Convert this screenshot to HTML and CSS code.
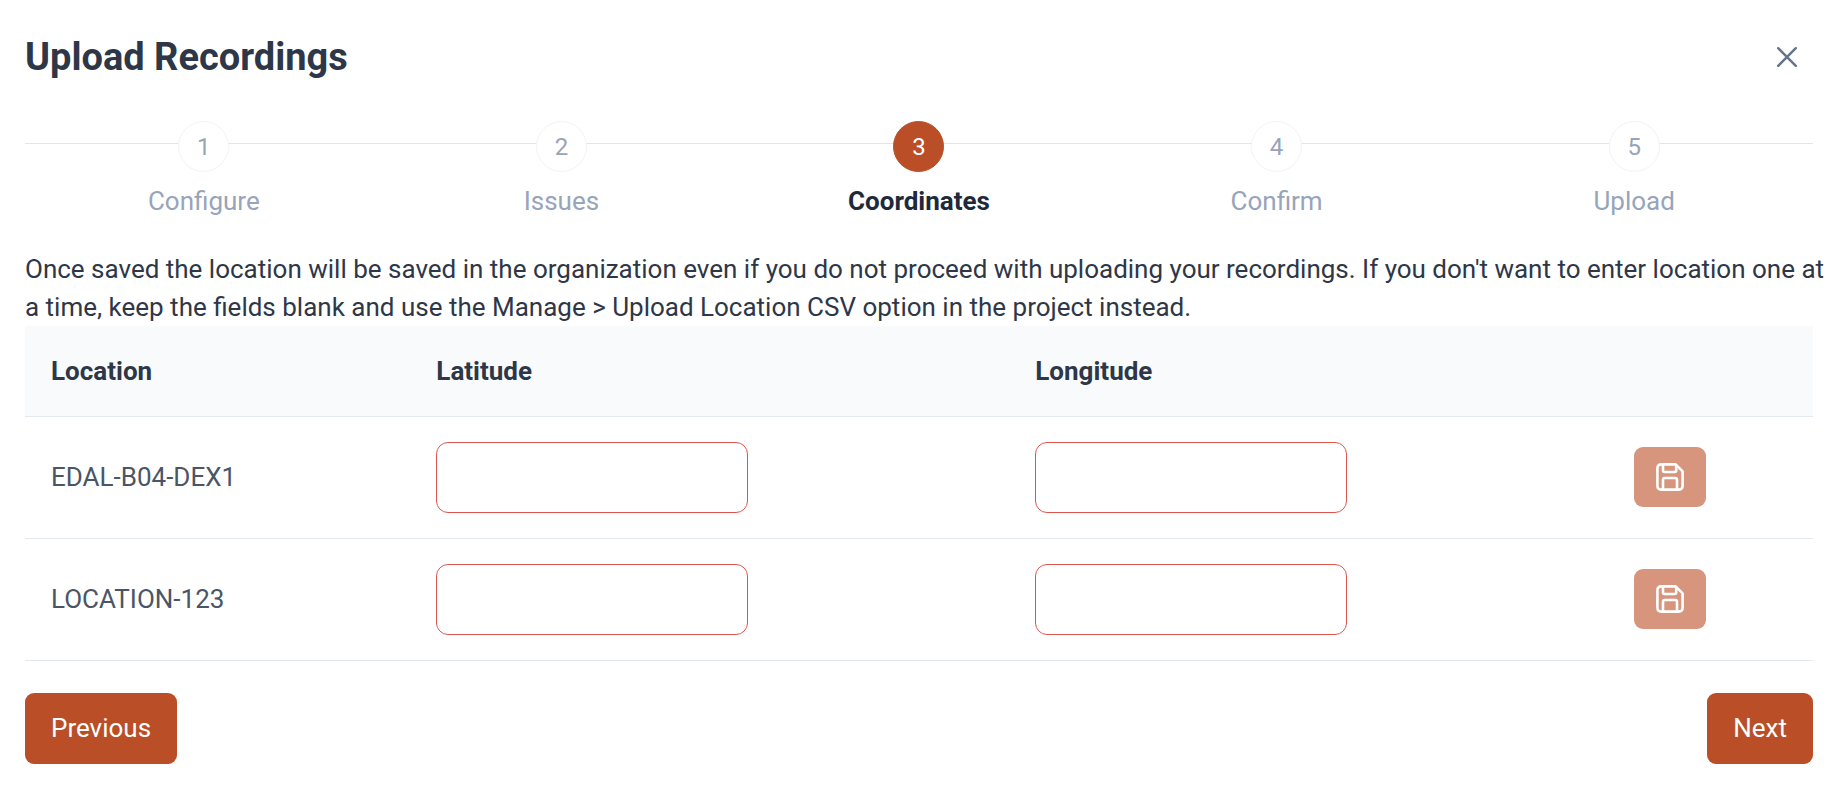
FILE: index.html
```html
<!DOCTYPE html>
<html lang="en">
<head>
<meta charset="utf-8">
<meta name="viewport" content="width=device-width, initial-scale=1">
<title>Upload Recordings</title>
<link rel="stylesheet" href="styles.css">
</head>
<body>
<svg class="sprite" aria-hidden="true">
  <symbol id="save" viewBox="0 0 14 14" fill="none" stroke="currentColor" stroke-linecap="round" stroke-linejoin="round">
    <path d="M9.8 .7H2.6Q.7 .7 .7 2.6v8.8Q.7 13.3 2.6 13.3h8.8q1.9 0 1.9-1.9V4.2z"/>
    <path d="M3.5 .9v2.9q0 .7.7.7h5.2q.7 0 .7-.7V1.1"/>
    <path d="M3.5 13.1V8.4q0-.9.9-.9h5.2q.9 0 .9.9v4.7"/>
  </symbol>
</svg>
<main class="dialog">
  <header class="dialog-header">
    <h1 class="title">Upload Recordings</h1>
    <button class="close" type="button" aria-label="Close">
      <svg class="close-icon" viewBox="0 0 20 20" fill="none" stroke="currentColor" stroke-width="2.4" stroke-linecap="round"><path d="M1.2 1.2l17.6 17.6M18.8 1.2L1.2 18.8"/></svg>
    </button>
  </header>
  <ol class="steps">
    <li class="step"><span class="step-number">1</span><span class="step-label">Configure</span></li>
    <li class="step"><span class="step-number">2</span><span class="step-label">Issues</span></li>
    <li class="step active" aria-current="step"><span class="step-number">3</span><span class="step-label">Coordinates</span></li>
    <li class="step"><span class="step-number">4</span><span class="step-label">Confirm</span></li>
    <li class="step"><span class="step-number">5</span><span class="step-label">Upload</span></li>
  </ol>
  <p class="note">Once saved the location will be saved in the organization even if you do not proceed with uploading your recordings. If you don't want to enter location one at a time, keep the fields blank and use the Manage &gt; Upload Location CSV option in the project instead.</p>
  <table class="locations">
    <colgroup><col class="col-location"><col class="col-coordinate"><col class="col-coordinate"><col></colgroup>
    <thead>
      <tr><th scope="col">Location</th><th scope="col">Latitude</th><th scope="col">Longitude</th><td></td></tr>
    </thead>
    <tbody>
      <tr>
        <td>EDAL-B04-DEX1</td>
        <td><input class="field" type="text" aria-label="Latitude of EDAL-B04-DEX1"></td>
        <td><input class="field" type="text" aria-label="Longitude of EDAL-B04-DEX1"></td>
        <td><button class="save" type="button" aria-label="Save EDAL-B04-DEX1" disabled><svg class="save-icon"><use href="#save"/></svg></button></td>
      </tr>
      <tr>
        <td>LOCATION-123</td>
        <td><input class="field" type="text" aria-label="Latitude of LOCATION-123"></td>
        <td><input class="field" type="text" aria-label="Longitude of LOCATION-123"></td>
        <td><button class="save" type="button" aria-label="Save LOCATION-123" disabled><svg class="save-icon"><use href="#save"/></svg></button></td>
      </tr>
    </tbody>
  </table>
  <footer class="actions">
    <button class="button" type="button">Previous</button>
    <button class="button" type="button">Next</button>
  </footer>
</main>
</body>
</html>
```
FILE: styles.css
```css
* {
  box-sizing: border-box;
}

body {
  margin: 0;
  background: #fff;
  color: #2e3747;
  font-family: Roboto, sans-serif;
  font-size: 26px;
  line-height: 38px;
}

button,
input {
  font: inherit;
}

.sprite {
  display: none;
}

.dialog {
  padding: 32px 25px 32px;
}

.dialog-header {
  display: flex;
  align-items: center;
  justify-content: space-between;
}

.title {
  margin: 0;
  font-size: 38px;
  line-height: 50px;
  font-weight: 700;
}

.close {
  display: grid;
  place-items: center;
  width: 52px;
  height: 50px;
  padding: 0;
  border: 0;
  background: none;
  color: #64748b;
}

.close-icon {
  width: 20px;
  height: 20px;
}

.steps {
  display: grid;
  grid-template-columns: repeat(5, 1fr);
  margin: 39px 0 0;
  padding: 0;
  list-style: none;
  background: linear-gradient(#e2e5ee, #e2e5ee) 0 22px / 100% 1px no-repeat;
}

.step {
  display: flex;
  flex-direction: column;
  align-items: center;
  gap: 10px;
  color: #97a4ba;
}

.step-number {
  display: grid;
  place-items: center;
  width: 51px;
  height: 51px;
  border: 1px solid #f1f3f8;
  border-radius: 50%;
  background: #fff;
  font-size: 24px;
}

.active .step-number {
  border-color: #b94e27;
  background: #b94e27;
  color: #fff;
}

.active .step-label {
  color: #1e293b;
  font-weight: 700;
}

.note {
  margin: 30px -12px 0 0;
}

.locations {
  width: 100%;
  border-collapse: collapse;
  table-layout: fixed;
}

.col-location {
  width: 21.55%;
}

.col-coordinate {
  width: 33.5%;
}

.locations th,
.locations td {
  padding: 25px 26px;
  border-bottom: 1px solid #e2e8f0;
  text-align: left;
}

.locations thead {
  height: 90px;
  background: #f8fafc;
}

.locations tbody {
  color: #4a5568;
}

.field {
  display: block;
  width: 312px;
  max-width: 100%;
  height: 71px;
  padding: 0 18px;
  border: 1px solid #dc5650;
  border-radius: 12px;
  background: #fff;
  color: inherit;
}

.save {
  display: grid;
  place-items: center;
  width: 72px;
  height: 60px;
  padding: 0;
  border: 0;
  border-radius: 9px;
  background: #d6957c;
  color: #fff;
}

.save-icon {
  width: 28px;
  height: 28px;
  stroke-width: 1.3;
}

.actions {
  display: flex;
  justify-content: space-between;
  margin-top: 32px;
}

.button {
  height: 71px;
  padding: 0 26px;
  border: 0;
  border-radius: 9px;
  background: #b94e27;
  color: #fff;
}
```
